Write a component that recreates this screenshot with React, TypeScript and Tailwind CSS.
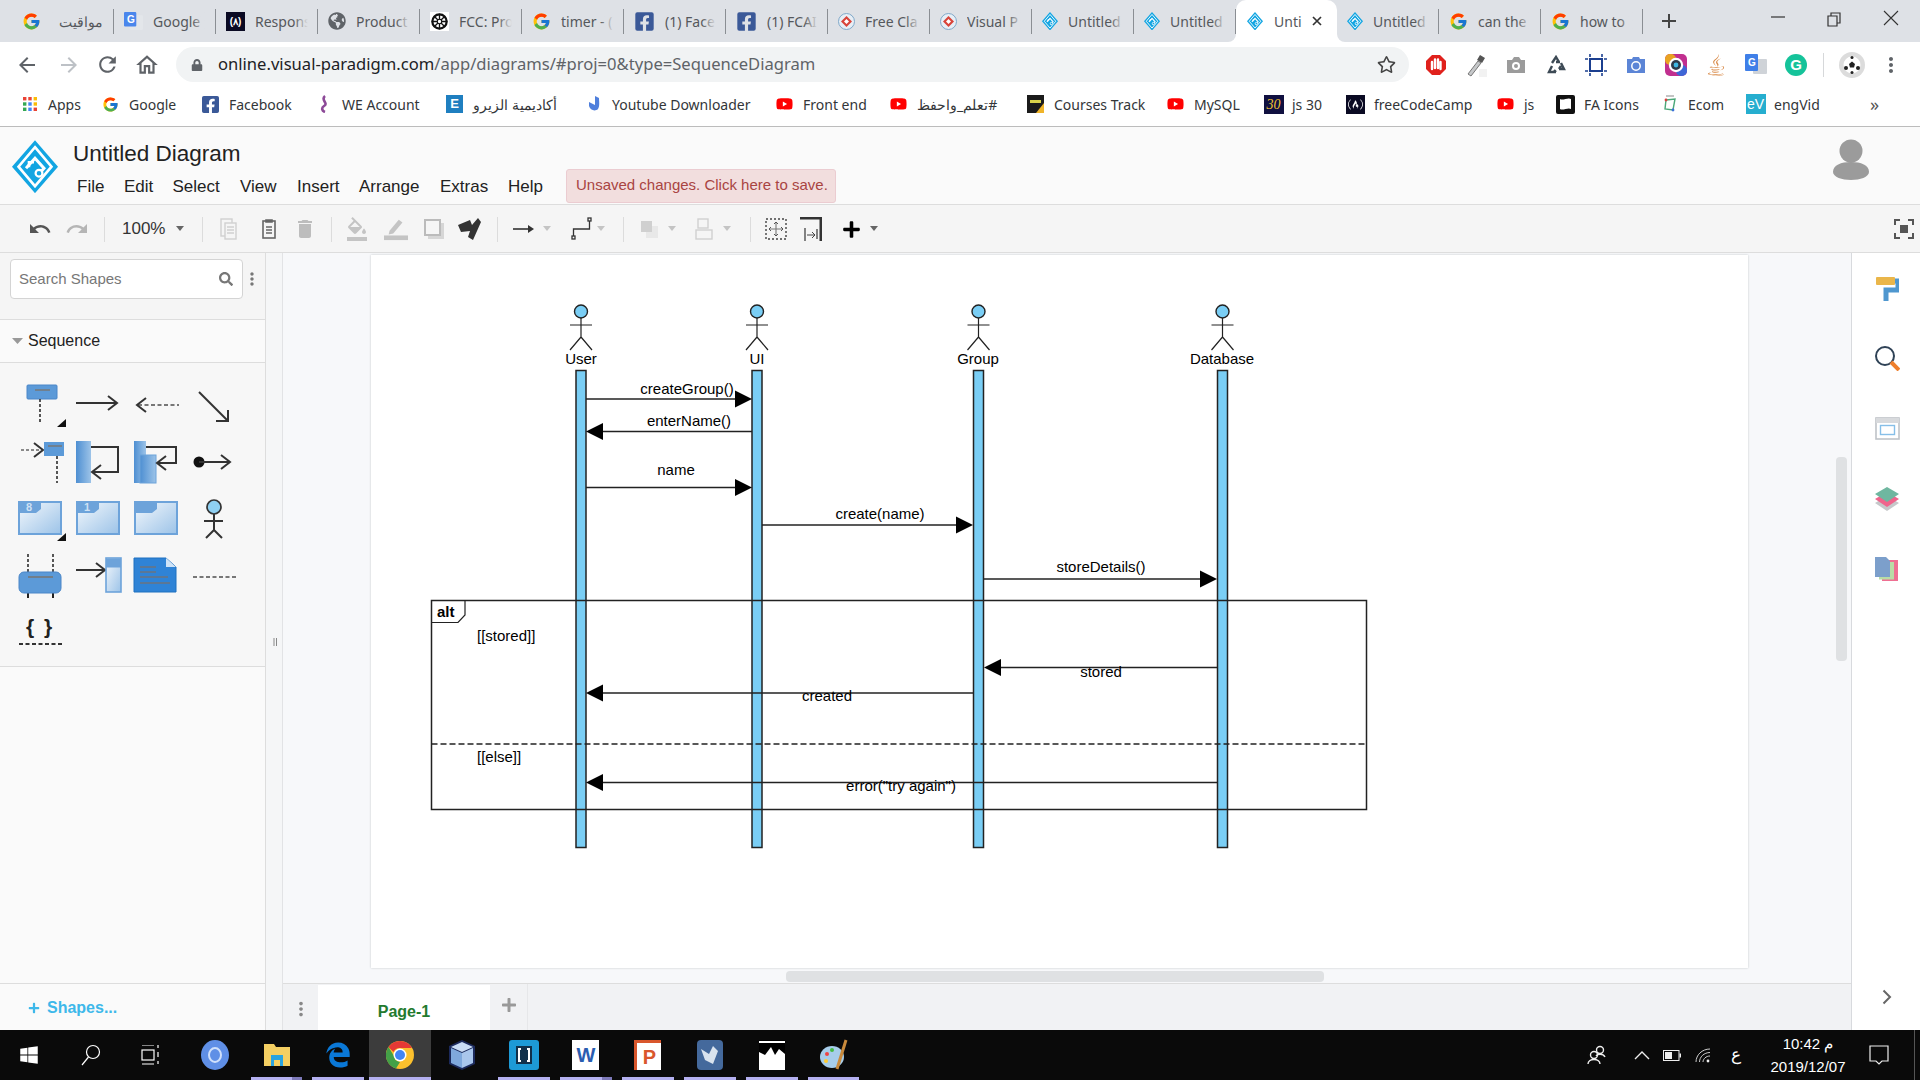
import React from 'react'
import { FcGoogle } from 'react-icons/fc'
import { FaFacebookSquare, FaYoutube, FaWindows, FaEdgeLegacy, FaPlus, FaSearch, FaLock, FaRegStar, FaGlobeAmericas, FaFreeCodeCamp, FaJava } from 'react-icons/fa'
import { MdUndo, MdRedo, MdDelete, MdArrowBack, MdArrowForward, MdRefresh, MdOutlineHome, MdMoreVert, MdFormatColorFill } from 'react-icons/md'

const ui = { fontFamily: '"Noto Sans", "Noto Sans CJK SC", sans-serif' }
const ar = { fontFamily: '"Liberation Sans", "Noto Sans", Arial, sans-serif' }

const VpLogo = ({ size = 16 }: { size?: number }) => (
  <svg width={size} height={size * 1.16} viewBox="0 0 46 53" className="shrink-0">
    <polygon points="23,0 46,26.5 23,53 0,26.5" fill="#12a5e2" />
    <polygon points="23,7 39.5,26.5 23,46 6.5,26.5" fill="none" stroke="#fff" strokeWidth="2.6" />
    <path d="M14 28 L23 18 L32 28 L25 36" fill="none" stroke="#fff" strokeWidth="3" />
    <circle cx="27" cy="33" r="3.4" fill="#12a5e2" stroke="#fff" strokeWidth="2.2" />
    <path d="M17 27 V22 H22" fill="none" stroke="#fff" strokeWidth="2.6" />
  </svg>
)

const FreeClass = () => (
  <svg width="17" height="17" viewBox="0 0 17 17" className="shrink-0">
    <circle cx="8.5" cy="8.5" r="8" fill="#e7eef5" stroke="#7fa8c9" />
    <polygon points="8.5,3 14,8.5 8.5,14 3,8.5" fill="#d9443a" />
    <polygon points="8.5,6 11,8.5 8.5,11 6,8.5" fill="#fff" />
  </svg>
)

const Translate = () => (
  <svg width="19" height="19" viewBox="0 0 17 17" className="shrink-0">
    <rect x="5" y="3" width="12" height="13" rx="1" fill="#e3e6ea" />
    <rect x="0" y="0" width="11" height="13" rx="1" fill="#4a86ec" />
    <text x="2.6" y="10" fontSize="9" fontWeight="700" fill="#fff" style={ar}>G</text>
  </svg>
)

const FccSquare = () => (
  <div className="w-[19px] h-[19px] bg-[#0a0a23] text-white text-[10px] font-bold flex items-center justify-center shrink-0" style={ar}>(٨)</div>
)

const FccRound = () => (
  <svg width="19" height="19" viewBox="0 0 17 17" className="shrink-0">
    <rect width="17" height="17" fill="#fff" />
    <circle cx="8.5" cy="8.5" r="6.4" fill="none" stroke="#111" strokeWidth="2" />
    <path d="M8.5 1.5V15.5M1.5 8.5H15.5M3.5 3.5L13.5 13.5M13.5 3.5L3.5 13.5" stroke="#111" strokeWidth="1.2" />
    <circle cx="8.5" cy="8.5" r="2" fill="#fff" stroke="#111" />
  </svg>
)

const tabs: { label: string; icon: React.ReactNode; rtl?: boolean }[] = [
  { label: 'مواقيت', icon: <FcGoogle size={19} className="shrink-0" />, rtl: true },
  { label: 'Google', icon: <Translate /> },
  { label: 'Respons', icon: <FccSquare /> },
  { label: 'Product', icon: <FaGlobeAmericas size={18} color="#5f6368" className="shrink-0" /> },
  { label: 'FCC: Pro', icon: <FccRound /> },
  { label: 'timer - (', icon: <FcGoogle size={19} className="shrink-0" /> },
  { label: '(1) Face', icon: <FaFacebookSquare size={21} color="#3b5998" className="shrink-0" /> },
  { label: '(1) FCAI', icon: <FaFacebookSquare size={21} color="#3b5998" className="shrink-0" /> },
  { label: 'Free Cla', icon: <FreeClass /> },
  { label: 'Visual P', icon: <FreeClass /> },
  { label: 'Untitled', icon: <VpLogo /> },
  { label: 'Untitled', icon: <VpLogo /> },
]

const tabsAfter: { label: string; icon: React.ReactNode }[] = [
  { label: 'Untitled', icon: <VpLogo /> },
  { label: 'can the', icon: <FcGoogle size={19} className="shrink-0" /> },
  { label: 'how to', icon: <FcGoogle size={19} className="shrink-0" /> },
]

const Tab = ({ label, icon, rtl }: { label: string; icon: React.ReactNode; rtl?: boolean }) => (
  <div className="w-[102px] h-full flex items-center shrink-0">
    <div className="flex-1 min-w-0 flex items-center gap-[10px] pl-[10px] pr-[9px]">
      {icon}
      <div className="relative flex-1 min-w-0 overflow-hidden">
        <div className={rtl ? 'whitespace-nowrap text-[14px] text-[#55585c] text-right pr-px' : 'whitespace-nowrap text-[14px] text-[#55585c]'} style={ui}>{label}</div>
        <div className={rtl ? 'absolute inset-y-0 left-0 w-[6px] bg-linear-to-l from-transparent to-[#dee1e6]' : 'absolute inset-y-0 right-0 w-[14px] bg-linear-to-r from-transparent to-[#dee1e6]'} />
      </div>
    </div>
    <div className="w-px h-[25px] bg-[#8a8e93] shrink-0" />
  </div>
)

const TabBar = () => (
  <div className="h-[42px] bg-[#dee1e6] flex items-stretch pl-[12px] shrink-0">
    {tabs.map((t, i) => (
      <Tab key={i} {...t} />
    ))}
    <div className="relative w-[101px] bg-white rounded-t-[10px] flex items-center pl-[11px] shrink-0">
      <div className="absolute left-[-8px] bottom-0 w-[8px] h-[8px] bg-white">
        <div className="w-full h-full bg-[#dee1e6] rounded-br-[8px]" />
      </div>
      <div className="absolute right-[-8px] bottom-0 w-[8px] h-[8px] bg-white">
        <div className="w-full h-full bg-[#dee1e6] rounded-bl-[8px]" />
      </div>
      <VpLogo />
      <div className="ml-[11px] text-[14px] text-[#55585c] w-[30px] overflow-hidden whitespace-nowrap" style={ui}>Unti</div>
      <svg width="12" height="12" viewBox="0 0 12 12" className="ml-[7px]"><path d="M2 2L10 10M10 2L2 10" stroke="#333" strokeWidth="1.7" /></svg>
    </div>
    {tabsAfter.map((t, i) => (
      <Tab key={i} {...t} />
    ))}
    <svg width="16" height="16" viewBox="0 0 16 16" className="self-center ml-[17.5px]"><path d="M8 1V15M1 8H15" stroke="#444" strokeWidth="2" /></svg>
    <svg width="16" height="16" viewBox="0 0 16 16" className="self-center ml-[93.5px] mb-[8px]"><path d="M1 8H15" stroke="#333" strokeWidth="1.2" /></svg>
    <svg width="16" height="16" viewBox="0 0 16 16" className="self-center ml-[40px] mb-[4px]"><path d="M2 5H11V15H2ZM5 5V2H14V12H11" fill="none" stroke="#333" strokeWidth="1.2" /></svg>
    <svg width="16" height="16" viewBox="0 0 16 16" className="self-center ml-[41px] mb-[6px]"><path d="M1 1L15 15M15 1L1 15" stroke="#333" strokeWidth="1.1" /></svg>
  </div>
)

const Ext = ({ children }: { children: React.ReactNode }) => (
  <div className="w-10 flex items-center justify-center shrink-0">{children}</div>
)

const AddressBar = () => (
  <div className="h-[42px] bg-white flex items-center pt-[3px] shrink-0">
    <div className="w-[176px] flex items-center shrink-0 pl-[15px]">
      <MdArrowBack size={24} color="#5f6368" />
      <MdArrowForward size={24} color="#bdc1c6" className="ml-[18px]" />
      <MdRefresh size={25} color="#5f6368" className="ml-[14px]" />
      <MdOutlineHome size={26} color="#5f6368" className="ml-[14px]" />
    </div>
    <div className="w-[1233px] h-[35px] bg-[#f1f3f4] rounded-full flex items-center pl-[15px] pr-[13px] shrink-0">
      <FaLock size={12} color="#5f6368" />
      <div className="ml-[15px] text-[16.6px] whitespace-nowrap" style={ui}>
        <span className="text-[#202124]">online.visual-paradigm.com</span>
        <span className="text-[#5f6368]">/app/diagrams/#proj=0&amp;type=SequenceDiagram</span>
      </div>
      <FaRegStar size={19} color="#444" className="ml-auto" />
    </div>
    <div className="flex items-center ml-[7px]">
      <Ext>
        <svg width="22" height="22" viewBox="0 0 22 22"><polygon points="7,1 15,1 21,7 21,15 15,21 7,21 1,15 1,7" fill="#e0211c" /><path d="M7 15V8M10 14V5.5M13 14V5.5M15.5 15V8" stroke="#fff" strokeWidth="2.4" strokeLinecap="round" /></svg>
      </Ext>
      <Ext>
        <svg width="22" height="24" viewBox="0 0 22 24"><path d="M3 21L13 8L16 10L6 23Z" fill="#c6c8ca" stroke="#777" /><path d="M12 7L15 2L20 5L17 10Z" fill="#555" /><rect x="14" y="16" width="8" height="8" fill="#f2f2f2" /></svg>
      </Ext>
      <Ext>
        <svg width="20" height="18" viewBox="0 0 20 18"><path d="M1 4H6L8 1H13L15 4H19V17H1Z" fill="#9b9b9b" /><circle cx="10" cy="10" r="4" fill="#fff" /><circle cx="10" cy="10" r="2" fill="#9b9b9b" /></svg>
      </Ext>
      <Ext>
        <svg width="20" height="20" viewBox="0 0 20 20" fill="none" stroke="#3d4a55" strokeWidth="2.4"><path d="M6 8L10 2L13 7M10 7H14" /><path d="M15 8L18 14H13M15 11L13 14" /><path d="M10 17H3L6 11M8 15L10 17" /></svg>
      </Ext>
      <Ext>
        <svg width="22" height="22" viewBox="0 0 22 22" fill="none" stroke="#1b3f8f"><rect x="5" y="5" width="12" height="12" strokeWidth="2" /><path d="M5 0V3M17 0V3M5 19V22M17 19V22M0 5H3M0 17H3M19 5H22M19 17H22" strokeWidth="1.6" /></svg>
      </Ext>
      <Ext>
        <svg width="20" height="18" viewBox="0 0 20 18"><path d="M1 3H6L7 1H13L14 3H19V17H1Z" fill="#5c85d6" /><circle cx="10" cy="10" r="4.2" fill="none" stroke="#fff" strokeWidth="1.5" /></svg>
      </Ext>
      <Ext>
        <svg width="22" height="22" viewBox="0 0 22 22"><rect width="22" height="22" rx="5" fill="#c12f8f" /><rect x="0" y="0" width="11" height="11" rx="5" fill="#e9a322" /><rect x="11" y="11" width="11" height="11" rx="5" fill="#3d66d6" /><circle cx="11" cy="11" r="7.2" fill="#fff" /><circle cx="11" cy="11" r="5" fill="#2f3b4a" /><circle cx="11" cy="11" r="2.4" fill="#3fb7e2" /></svg>
      </Ext>
      <Ext>
        <FaJava size={22} color="#d98b4a" />
      </Ext>
      <Ext>
        <svg width="22" height="22" viewBox="0 0 22 22"><rect x="8" y="5" width="14" height="15" rx="1" fill="#cfd3d8" /><rect x="0" y="0" width="13" height="17" rx="1" fill="#3f7fe8" /><text x="3" y="12" fontSize="10" fontWeight="700" fill="#fff" style={ar}>G</text></svg>
      </Ext>
      <Ext>
        <svg width="22" height="22" viewBox="0 0 22 22"><circle cx="11" cy="11" r="11" fill="#15c39a" /><text x="11" y="16" textAnchor="middle" fontSize="15" fontWeight="700" fill="#fff" style={ar}>G</text></svg>
      </Ext>
    </div>
    <div className="w-px h-[24px] bg-[#d6d8da] ml-[7px]" />
    <div className="w-[26px] h-[26px] rounded-full bg-[#dcdcdc] ml-[15px] flex items-center justify-center">
      <svg width="18" height="18" viewBox="0 0 18 18"><circle cx="9" cy="9" r="8.5" fill="#fff" /><path d="M9 5.5L12 8L11 11.5H7L6 8Z" fill="#222" /><circle cx="3" cy="12" r="2" fill="#222" /><circle cx="15" cy="12" r="2" fill="#222" /><circle cx="9" cy="1.6" r="1.5" fill="#222" /><circle cx="9" cy="16.5" r="1.5" fill="#222" /></svg>
    </div>
    <MdMoreVert size={24} color="#5f6368" className="ml-[14px]" />
  </div>
)

const Favicon = ({ children }: { children: React.ReactNode }) => (
  <div className="w-[17px] h-[18px] flex items-center justify-center shrink-0">{children}</div>
)

const YT = <FaYoutube size={18} color="#f00" />
const G = <FcGoogle size={17} />
const bookmarks: { label: string; cls: string; icon: React.ReactNode; rtl?: boolean }[] = [
  { label: 'Apps', cls: 'w-[81px]', icon: (
    <svg width="14" height="14" viewBox="0 0 14 14">
      <rect width="3.4" height="3.4" fill="#ea4335" /><rect x="5.3" width="3.4" height="3.4" fill="#ea4335" /><rect x="10.6" width="3.4" height="3.4" fill="#fbbc05" />
      <rect y="5.3" width="3.4" height="3.4" fill="#34a853" /><rect x="5.3" y="5.3" width="3.4" height="3.4" fill="#4285f4" /><rect x="10.6" y="5.3" width="3.4" height="3.4" fill="#fbbc05" />
      <rect y="10.6" width="3.4" height="3.4" fill="#34a853" /><rect x="5.3" y="10.6" width="3.4" height="3.4" fill="#4285f4" /><rect x="10.6" y="10.6" width="3.4" height="3.4" fill="#ea4335" />
    </svg>
  ) },
  { label: 'Google', cls: 'w-[100px]', icon: G },
  { label: 'Facebook', cls: 'w-[113px]', icon: <FaFacebookSquare size={21} color="#3b5998" /> },
  { label: 'WE Account', cls: 'w-[131px]', icon: (
    <svg width="12" height="18" viewBox="0 0 12 18"><path d="M7 1C2 5 11 8 6 11C3 13 4 16 7 17" fill="none" stroke="#8d4a98" strokeWidth="2.6" /></svg>
  ) },
  { label: 'أكاديمية الزيرو', cls: 'w-[139px]', icon: (
    <div className="w-[17px] h-[18px] bg-[#1f7fc0] text-white text-[13px] font-bold flex items-center justify-center" style={ar}>E</div>
  ), rtl: true },
  { label: 'Youtube Downloader', cls: 'w-[191px]', icon: (
    <svg width="14" height="18" viewBox="0 0 14 18"><path d="M8 1V10L2 7V11C3 15 8 17 11 14C13 11 12 6 12 3Z" fill="#4f7fdc" /></svg>
  ) },
  { label: 'Front end', cls: 'w-[114px]', icon: YT },
  { label: '#تعلم_واحفظ', cls: 'w-[137px]', icon: YT, rtl: true },
  { label: 'Courses Track', cls: 'w-[140px]', icon: (
    <svg width="17" height="18" viewBox="0 0 17 18"><rect width="17" height="18" fill="#1b1b1b" /><polygon points="17,18 9,18 17,8" fill="#f0b429" /><rect x="3" y="5" width="11" height="3" fill="#d9d24a" /></svg>
  ) },
  { label: 'MySQL', cls: 'w-[98px]', icon: YT },
  { label: 'js 30', cls: 'w-[82px]', icon: (
    <div className="w-[20px] h-[19px] bg-[#101040] text-[#f2c230] text-[14px] italic flex items-center justify-center shrink-0" style={{ fontFamily: '"Liberation Serif", serif' }}>30</div>
  ) },
  { label: 'freeCodeCamp', cls: 'w-[150px]', icon: <div className="w-[19px] h-[19px] bg-[#0a0a23] flex items-center justify-center shrink-0"><FaFreeCodeCamp size={15} color="#fff" /></div> },
  { label: 'js', cls: 'w-[60px]', icon: YT },
  { label: 'FA Icons', cls: 'w-[104px]', icon: (
    <svg width="19" height="19" viewBox="0 0 19 19" className="shrink-0"><rect width="19" height="19" rx="2" fill="#111" /><path d="M4 4C7 6 12 2 15 4V14C12 12 7 16 4 14Z" fill="#fff" /></svg>
  ) },
  { label: 'Ecom', cls: 'w-[86px]', icon: (
    <svg width="16" height="18" viewBox="0 0 16 18" fill="none"><path d="M4 5L13 4L11 15L3 14Z" stroke="#4aa878" strokeWidth="1.4" /><circle cx="4" cy="5" r="1.4" fill="#d94040" /><circle cx="11" cy="15" r="1.4" fill="#3a6fd8" /><path d="M4 1H12" stroke="#888" /></svg>
  ) },
  { label: 'engVid', cls: 'w-[120px]', icon: (
    <div className="w-[20px] h-[20px] bg-[#26aecf] text-white text-[14px] flex items-center justify-center shrink-0" style={ar}>eV</div>
  ) },
]

const Bookmarks = () => (
  <div className="h-[43px] bg-white border-b border-[#bcbcbc] flex items-center pl-[21px] pb-[2px] shrink-0">
    {bookmarks.map((b) => (
      <div key={b.label} className={b.cls + ' flex items-center gap-[10px] shrink-0'}>
        <Favicon>{b.icon}</Favicon>
        <span dir={b.rtl ? 'rtl' : undefined} className="text-[14px] text-[#333639] whitespace-nowrap" style={ui}>{b.label}</span>
      </div>
    ))}
    <span className="ml-[3px] text-[#555] text-[18px] leading-none" style={ui}>»</span>
  </div>
)

const menu = [
  { label: 'File', cls: 'w-[47px]' },
  { label: 'Edit', cls: 'w-[48.5px]' },
  { label: 'Select', cls: 'w-[67.5px]' },
  { label: 'View', cls: 'w-[57px]' },
  { label: 'Insert', cls: 'w-[62px]' },
  { label: 'Arrange', cls: 'w-[81px]' },
  { label: 'Extras', cls: 'w-[68px]' },
  { label: 'Help', cls: 'w-[58px]' },
]

const AppHeader = () => (
  <div className="h-[78px] bg-[#fafafa] border-b border-[#dddddd] flex shrink-0" style={ar}>
    <div className="pl-[12px] pt-[13px] shrink-0">
      <VpLogo size={46} />
    </div>
    <div className="pl-[15px] pt-[12px]">
      <div className="text-[22.5px] leading-[30px] text-[#222] whitespace-nowrap">Untitled Diagram</div>
      <div className="flex items-center pl-[4px]">
        {menu.map((m) => (
          <div key={m.label} className={m.cls + ' text-[17px] leading-[34px] text-[#222]'}>{m.label}</div>
        ))}
        <div className="w-[270px] h-[34px] mb-[2px] bg-[#f2dede] border border-[#ebccd1] rounded-[3px] text-[#a94442] text-[15px] leading-[30px] pl-[9px] whitespace-nowrap">Unsaved changes. Click here to save.</div>
      </div>
    </div>
    <div className="ml-auto pr-[51px] pt-[12px]">
      <svg width="36" height="41" viewBox="0 0 36 41"><circle cx="18" cy="12" r="11.5" fill="#9b9b9b" /><path d="M0 33C0 26 8 23 18 23C28 23 36 26 36 33C36 38 27 41 18 41C9 41 0 38 0 33Z" fill="#9b9b9b" /></svg>
    </div>
  </div>
)

const Sep = ({ cls }: { cls: string }) => <div className={cls + ' w-px h-[25px] bg-[#dcdcdc] shrink-0'} />
const Caret = ({ cls, dark }: { cls: string; dark?: boolean }) => (
  <svg width="8" height="6" viewBox="0 0 8 6" className={cls + ' shrink-0'}><polygon points="0,0 8,0 4,5" fill={dark ? '#666' : '#c4c4c4'} /></svg>
)
const Tool = ({ cls, children }: { cls: string; children: React.ReactNode }) => (
  <div className={cls + ' w-6 h-6 flex items-center justify-center shrink-0'}>{children}</div>
)

const Toolbar = () => (
  <div className="h-[48px] bg-[#f5f5f5] border-b border-[#dddddd] flex items-center pl-[28px] pt-[1px] shrink-0" style={ar}>
    <Tool cls=""><MdUndo size={26} color="#555" /></Tool>
    <Tool cls="ml-[12.5px]"><MdRedo size={26} color="#b5b5b5" /></Tool>
    <Sep cls="ml-[15.5px]" />
    <div className="ml-[17px] w-[43px] text-[17px] text-[#333]">100%</div>
    <Caret cls="ml-[11px]" dark />
    <Sep cls="ml-[18px]" />
    <Tool cls="ml-[13px]">
      <svg width="18" height="22" viewBox="0 0 18 22" fill="none" stroke="#d0d0d0" strokeWidth="1.4"><rect x="2" y="1" width="11" height="17" /><rect x="6" y="5" width="11" height="16" fill="#f5f5f5" /><path d="M8 9H15M8 12H15M8 15H15" /></svg>
    </Tool>
    <Tool cls="ml-[17px]">
      <svg width="14" height="20" viewBox="0 0 14 20" fill="none" stroke="#666" strokeWidth="1.6"><rect x="1" y="2" width="12" height="17" /><path d="M4 1H10V3H4Z" fill="#666" /><path d="M4 8H10M4 11H10M4 14H10" /></svg>
    </Tool>
    <Tool cls="ml-[12px]"><MdDelete size={26} color="#bdbdbd" /></Tool>
    <Sep cls="ml-[14px]" />
    <Tool cls="ml-[13px]"><MdFormatColorFill size={24} color="#c4c4c4" /></Tool>
    <Tool cls="ml-[15px]">
      <svg width="26" height="24" viewBox="0 0 26 24"><path d="M6 14L16 2L20 5L10 17L5 18Z" fill="#c4c4c4" /><rect x="0" y="19" width="26" height="5" fill="#c4c4c4" /></svg>
    </Tool>
    <Tool cls="ml-[13.5px]">
      <svg width="20" height="20" viewBox="0 0 20 20"><rect x="4" y="4" width="16" height="16" fill="#d6d6d6" /><rect x="1" y="1" width="15" height="15" fill="#f5f5f5" stroke="#bbb" strokeWidth="2" /></svg>
    </Tool>
    <Tool cls="ml-[12.5px]">
      <svg width="24" height="24" viewBox="0 0 24 24"><path d="M0 8L12 3L14 8L20 1L23 5L15 23L10 20L12 14L3 15Z" fill="#333" /></svg>
    </Tool>
    <Sep cls="ml-[15px]" />
    <Tool cls="ml-[13px]">
      <svg width="22" height="10" viewBox="0 0 22 10"><path d="M1 5H20" stroke="#333" strokeWidth="1.6" /><polygon points="16,1 22,5 16,9" fill="#333" /></svg>
    </Tool>
    <Caret cls="ml-[8px]" />
    <Tool cls="ml-[19px]">
      <svg width="22" height="24" viewBox="0 0 22 24" fill="none" stroke="#333" strokeWidth="1.3"><rect x="1" y="19" width="3" height="3" /><rect x="17" y="1" width="3" height="3" /><path d="M2.5 19V12H18.5V4" /></svg>
    </Tool>
    <Caret cls="ml-[3px]" />
    <Sep cls="ml-[18px]" />
    <Tool cls="ml-[13px]">
      <svg width="20" height="20" viewBox="0 0 20 20"><rect x="7" y="7" width="12" height="12" fill="#e8e8e8" /><rect x="2" y="2" width="11" height="11" fill="#d0d0d0" /></svg>
    </Tool>
    <Caret cls="ml-[7px]" />
    <Tool cls="ml-[16px]">
      <svg width="18" height="22" viewBox="0 0 18 22" fill="none" stroke="#d0d0d0" strokeWidth="1.4"><rect x="3" y="1" width="10" height="9" /><rect x="1" y="12" width="16" height="9" /></svg>
    </Tool>
    <Caret cls="ml-[7px]" />
    <Sep cls="ml-[18.5px]" />
    <Tool cls="ml-[13.5px]">
      <svg width="22" height="22" viewBox="0 0 22 22" fill="none"><rect x="1" y="1" width="20" height="20" stroke="#444" strokeWidth="1.4" strokeDasharray="2 2" /><path d="M11 4V18M4 11H18" stroke="#777" strokeWidth="1.1" /><path d="M9 6L11 4L13 6M9 16L11 18L13 16M6 9L4 11L6 13M16 9L18 11L16 13" stroke="#555" /></svg>
    </Tool>
    <Tool cls="ml-[11px]">
      <svg width="22" height="24" viewBox="0 0 22 24" fill="none"><path d="M0 1H21V24" stroke="#333" strokeWidth="3" /><path d="M5 11V24M17 12V22" stroke="#444" strokeWidth="1.3" /><path d="M7 18H15M12 15L15 18L12 21" stroke="#444" /></svg>
    </Tool>
    <Tool cls="ml-[16px]"><FaPlus size={19} color="#000" /></Tool>
    <Caret cls="ml-[7px]" dark />
    <div className="ml-auto mr-[4px] w-6 h-6 flex items-center justify-center">
      <svg width="20" height="20" viewBox="0 0 20 20" fill="none" stroke="#555" strokeWidth="2"><path d="M1 6V1H6M14 1H19V6M19 14V19H14M6 19H1V14" /><rect x="6" y="6" width="8" height="8" fill="#555" stroke="none" /></svg>
    </div>
  </div>
)

const grad = (
  <defs>
    <linearGradient id="boxBlue" x1="0" y1="0" x2="1" y2="1">
      <stop offset="0" stopColor="#f4f8fc" />
      <stop offset="1" stopColor="#9cc3e8" />
    </linearGradient>
    <linearGradient id="barBlue" x1="0" y1="0" x2="1" y2="0">
      <stop offset="0" stopColor="#4e8fd2" />
      <stop offset="1" stopColor="#9cc3e8" />
    </linearGradient>
  </defs>
)

const Cell = ({ children }: { children: React.ReactNode }) => (
  <svg width="46" height="46" viewBox="0 0 46 46" className="overflow-visible">{children}</svg>
)
const Corner = () => <polygon points="48,39 48,47 39,47" fill="#111" />
const Head = ({ x, y, dir = 1 }: { x: number; y: number; dir?: number }) => (
  <path d={`M${x - 9 * dir} ${y - 7}L${x} ${y}L${x - 9 * dir} ${y + 7}`} fill="none" stroke="#333" strokeWidth="2" />
)
const Frame = ({ tab }: { tab?: string }) => (
  <>
    <rect x="1" y="8" width="42" height="32" fill="url(#boxBlue)" stroke="#6da3da" strokeWidth="2" />
    <path d="M1 8H23V15L18 19H1Z" fill="#6da3da" />
    {tab && <text x="8" y="17" fontSize="11" fontWeight="700" fill="#cfe1f4" style={ar}>{tab}</text>}
  </>
)

const shapes = [
  <Cell key="0"><rect x="9" y="5" width="30" height="14" rx="1" fill="#5c9ad8" stroke="#4a86c8" /><path d="M17 10H32" stroke="#777" strokeWidth="1.5" /><path d="M22 19V43" stroke="#444" strokeWidth="1.8" strokeDasharray="3 2" /><Corner /></Cell>,
  <Cell key="1"><path d="M0 23H41" stroke="#333" strokeWidth="2" /><Head x={41} y={23} /></Cell>,
  <Cell key="2"><path d="M4 25H45" stroke="#777" strokeWidth="1.8" strokeDasharray="4 2.5" /><Head x={3} y={25} dir={-1} /></Cell>,
  <Cell key="3"><path d="M7 12L36 41" stroke="#333" strokeWidth="2" /><path d="M36 30L36 41L24 41" fill="none" stroke="#333" strokeWidth="2" /></Cell>,
  <Cell key="4"><path d="M3 13H25" stroke="#666" strokeWidth="1.7" strokeDasharray="3 2" /><Head x={25} y={13} /><rect x="26" y="5" width="20" height="14" fill="#5c9ad8" /><path d="M30 9H44" stroke="#777" strokeWidth="1.5" /><path d="M39 19V46" stroke="#444" strokeWidth="1.8" strokeDasharray="3 2" /></Cell>,
  <Cell key="5"><rect x="0" y="4" width="15" height="42" fill="url(#barBlue)" /><path d="M15 10H42V35H17" fill="none" stroke="#333" strokeWidth="2" /><Head x={16} y={35} dir={-1} /></Cell>,
  <Cell key="6"><rect x="0" y="4" width="12" height="42" fill="url(#barBlue)" /><rect x="6" y="18" width="16" height="28" fill="url(#barBlue)" stroke="#6da3da" /><path d="M12 10H42V26H23" fill="none" stroke="#333" strokeWidth="2" /><Head x={23} y={26} dir={-1} /></Cell>,
  <Cell key="7"><circle cx="7" cy="25" r="5.5" fill="#111" /><path d="M7 25H38" stroke="#333" strokeWidth="2" /><Head x={38} y={25} /></Cell>,
  <Cell key="8"><Frame tab="8" /><Corner /></Cell>,
  <Cell key="9"><Frame tab="1" /></Cell>,
  <Cell key="10"><Frame /></Cell>,
  <Cell key="11"><circle cx="22" cy="13" r="7" fill="#8fd0f2" stroke="#333" strokeWidth="1.7" /><path d="M22 20V36M12 27H31M22 36L14 44M22 36L30 44" stroke="#333" strokeWidth="2" fill="none" /></Cell>,
  <Cell key="12"><path d="M10 3V21M35 3V21" stroke="#444" strokeWidth="1.8" strokeDasharray="3 2" /><path d="M10 42V47M35 42V47" stroke="#222" strokeWidth="2" /><rect x="1" y="21" width="42" height="21" rx="5" fill="#5c9ad8" stroke="#4a86c8" /><path d="M10 26H35" stroke="#777" strokeWidth="1.6" /></Cell>,
  <Cell key="13"><path d="M0 19H29" stroke="#333" strokeWidth="2" /><Head x={29} y={19} /><rect x="30" y="7" width="15" height="34" fill="url(#boxBlue)" stroke="#6da3da" strokeWidth="1.6" /><path d="M30 12H45" stroke="#6da3da" strokeWidth="9" /></Cell>,
  <Cell key="14"><path d="M0 7H32L42 16V41H0Z" fill="#2f83d6" stroke="#1f70c0" /><path d="M32 7V16H42" fill="#cfe3f7" /><path d="M6 16H22M6 21H22M6 26H34M6 32H36" stroke="#6b7480" strokeWidth="1.7" /></Cell>,
  <Cell key="15"><path d="M1 26H44" stroke="#777" strokeWidth="1.8" strokeDasharray="4 2.5" /></Cell>,
  <Cell key="16"><text x="8" y="26" fontSize="21" fontWeight="700" fill="#222" style={ar}>{'{'}</text><text x="26" y="26" fontSize="21" fontWeight="700" fill="#222" style={ar}>{'}'}</text><path d="M1 36H45" stroke="#333" strokeWidth="1.9" strokeDasharray="4 2.5" /></Cell>,
]

const Sidebar = () => (
  <div className="w-[266px] border-r border-[#dddddd] bg-[#fafafa] flex flex-col shrink-0" style={ar}>
    <div className="h-[67px] bg-[#f5f5f5] border-b border-[#dddddd] flex items-start pl-[10px] pt-[6px] shrink-0">
      <div className="w-[233px] h-[40px] bg-white border border-[#d4d4d4] rounded-[4px] flex items-center pl-[8px] pr-[9px]">
        <span className="text-[15px] text-[#777]">Search Shapes</span>
        <FaSearch size={14} color="#777" className="ml-auto" />
      </div>
      <MdMoreVert size={20} color="#777" className="mt-[10px] ml-[-1px]" />
    </div>
    <div className="h-[43px] border-b border-[#dddddd] flex items-center pl-[12px] shrink-0">
      <svg width="11" height="6" viewBox="0 0 11 6"><polygon points="0,0 11,0 5.5,6" fill="#999" /></svg>
      <span className="ml-[5px] text-[16px] text-[#222]">Sequence</span>
    </div>
    <div className="h-[304px] bg-[#f7f7f7] border-b border-[#dddddd] pl-[18px] pt-[17px] shrink-0">
      <svg width="0" height="0" className="absolute">{grad}</svg>
      <div className="grid grid-cols-[repeat(4,46px)] gap-x-[12px] gap-y-[11px]">{shapes}</div>
    </div>
    <div className="flex-1" />
    <div className="h-[47px] border-t border-[#dddddd] flex items-center pl-[28px] pt-[2px] shrink-0">
      <FaPlus size={12} color="#3db8ea" />
      <span className="ml-[7px] text-[16px] font-bold text-[#3db8ea]">Shapes...</span>
    </div>
  </div>
)

const lifelines = [576, 752, 973.5, 1217.5]
const actors = [581, 757, 978.5, 1222.5]
const msgs = [
  { a: 586, b: 752, y: 399 },
  { a: 752, b: 586, y: 431.5 },
  { a: 586, b: 752, y: 487.5 },
  { a: 762, b: 973, y: 525 },
  { a: 984, b: 1217, y: 579 },
  { a: 1217, b: 984, y: 667.5 },
  { a: 973, b: 586, y: 693 },
  { a: 1217, b: 586, y: 782.5 },
]

const labels = [
  { t: 'User', c: 'left-[210px] top-[96px] -translate-x-1/2' },
  { t: 'UI', c: 'left-[386px] top-[96px] -translate-x-1/2' },
  { t: 'Group', c: 'left-[607px] top-[96px] -translate-x-1/2' },
  { t: 'Database', c: 'left-[851px] top-[96px] -translate-x-1/2' },
  { t: 'createGroup()', c: 'left-[316px] top-[126px] -translate-x-1/2' },
  { t: 'enterName()', c: 'left-[318px] top-[158px] -translate-x-1/2' },
  { t: 'name', c: 'left-[305px] top-[207px] -translate-x-1/2' },
  { t: 'create(name)', c: 'left-[509px] top-[251px] -translate-x-1/2' },
  { t: 'storeDetails()', c: 'left-[730px] top-[304px] -translate-x-1/2' },
  { t: 'stored', c: 'left-[730px] top-[409px] -translate-x-1/2' },
  { t: 'created', c: 'left-[456px] top-[433px] -translate-x-1/2' },
  { t: 'error("try again")', c: 'left-[530px] top-[523px] -translate-x-1/2' },
  { t: '[[stored]]', c: 'left-[106px] top-[373px]' },
  { t: '[[else]]', c: 'left-[106px] top-[494px]' },
]

const Diagram = () => (
  <div className="relative w-[1377px] h-[713px] bg-white shadow-[0_0_2px_#c4c6c9]" style={ar}>
    <svg width="1377" height="713" viewBox="371 255 1377 713" className="absolute inset-0">
      {actors.map((x) => (
        <g key={x} fill="none" stroke="#222" strokeWidth="1.2">
          <circle cx={x} cy="311.5" r="6.5" fill="#7acef5" strokeWidth="1.4" />
          <path d={`M${x} 318V337M${x - 11} 325H${x + 11}M${x} 337L${x - 11} 350M${x} 337L${x + 11} 350`} />
        </g>
      ))}
      {lifelines.map((x) => (
        <rect key={x} x={x} y="370.5" width="10" height="477" fill="#7acef5" stroke="#222" strokeWidth="1.5" />
      ))}
      {msgs.map((m) => {
        const d = m.b > m.a ? 1 : -1
        return (
          <g key={m.y}>
            <line x1={m.a} y1={m.y} x2={m.b - 16 * d} y2={m.y} stroke="#222" strokeWidth="1.3" />
            <polygon points={`${m.b},${m.y} ${m.b - 17 * d},${m.y - 8.5} ${m.b - 17 * d},${m.y + 8.5}`} fill="#000" />
          </g>
        )
      })}
      <rect x="431.5" y="600.5" width="935" height="209" fill="none" stroke="#222" strokeWidth="1.5" />
      <path d="M431.5 622.5H458L465 615V600.5" fill="none" stroke="#222" strokeWidth="1.2" />
      <line x1="431.5" y1="744" x2="1366" y2="744" stroke="#222" strokeWidth="1.4" strokeDasharray="6 3" />
    </svg>
    {labels.map((l) => (
      <span key={l.t} className={l.c + ' absolute text-[15px] leading-[16px] text-black whitespace-nowrap'}>{l.t}</span>
    ))}
    <span className="absolute left-[66px] top-[349px] text-[15px] leading-[16px] font-bold text-black">alt</span>
  </div>
)

const Canvas = () => (
  <div className="flex-1 min-w-0 flex flex-col" style={ar}>
    <div className="relative flex-1 bg-[#f7f8fa] pl-[88px] pt-[2px] overflow-hidden">
      <Diagram />
      <div className="absolute left-[503px] bottom-[1px] w-[538px] h-[11px] bg-[#dfe1e3] rounded-[4px]" />
      <div className="absolute right-[4px] top-[204px] w-[11px] h-[204px] bg-[#dfe1e3] rounded-[4px]" />
    </div>
    <div className="h-[47px] bg-[#f1f2f4] border-t border-[#dddddd] flex items-stretch shrink-0">
      <div className="w-[35px] flex items-center justify-center pt-[4px]"><MdMoreVert size={22} color="#888" /></div>
      <div className="w-[172px] mt-px bg-white flex items-center justify-center pt-[9px] text-[16px] font-bold text-[#237a2e]">Page-1</div>
      <div className="w-[38px] flex items-center justify-center border-r border-[#e6e7e9] pb-[4px]"><FaPlus size={16} color="#999" /></div>
    </div>
  </div>
)

const RightPanel = () => (
  <div className="w-[69px] bg-white border-l border-[#d8dade] flex flex-col items-center pl-[2px] pt-[24px] shrink-0">
    <div className="h-[70px] w-full flex justify-center">
      <svg width="24" height="25" viewBox="0 0 24 25"><path d="M20 4H23V13H11V24" fill="none" stroke="#4f97cf" strokeWidth="5" /><rect x="1" y="0" width="19" height="8" rx="1" fill="#eab64a" /></svg>
    </div>
    <div className="h-[70px] w-full flex justify-center">
      <svg width="26" height="26" viewBox="0 0 26 26" className="mt-[-2px]"><circle cx="11" cy="11" r="9" fill="#fff" stroke="#2f4256" strokeWidth="2" /><path d="M17 17L25 25" stroke="#ee7f2d" strokeWidth="4" /></svg>
    </div>
    <div className="h-[70px] w-full flex justify-center">
      <svg width="25" height="23" viewBox="0 0 25 23"><rect x="1" y="1" width="23" height="21" fill="#fff" stroke="#bfc3c8" strokeWidth="1.6" /><rect x="1" y="1" width="23" height="5" fill="#d8dadd" /><rect x="5.5" y="8.5" width="14" height="9" fill="none" stroke="#86bfe8" strokeWidth="1.4" /></svg>
    </div>
    <div className="h-[70px] w-full flex justify-center">
      <svg width="24" height="25" viewBox="0 0 24 25"><polygon points="12,9 24,16 12,24 0,16" fill="#c6c8ca" /><polygon points="12,5 24,12 12,20 0,12" fill="#f0648c" /><polygon points="12,0 24,7 12,15 0,7" fill="#6fb7a0" /></svg>
    </div>
    <div className="h-[70px] w-full flex justify-center">
      <svg width="24" height="25" viewBox="0 0 24 25"><rect x="7" y="3" width="16" height="21" fill="#ef6f92" /><rect x="4" y="5" width="15" height="17.5" fill="#b9dca6" /><path d="M0 0H11L15 4V20H0Z" fill="#7c9fcb" /></svg>
    </div>
    <div className="flex-1" />
    <svg width="10" height="16" viewBox="0 0 10 16" className="mb-[25px]"><path d="M1.5 1.5L8 8L1.5 14.5" fill="none" stroke="#666" strokeWidth="2" /></svg>
  </div>
)

const Slot = ({ on, split, active, children }: { on?: boolean; split?: boolean; active?: boolean; children: React.ReactNode }) => (
  <div className={active ? 'relative w-[61.9px] h-full bg-[#3c3c3c] flex items-center justify-center shrink-0' : 'relative w-[61.9px] h-full flex items-center justify-center shrink-0'}>
    {children}
    {on && <div className={active ? 'absolute bottom-0 inset-x-0 h-[3px] bg-[#b4b0f0]' : 'absolute bottom-0 inset-x-[5px] h-[3px] bg-[#b4b0f0]'} />}
    {split && <div className="absolute bottom-0 right-[5px] w-[10px] h-[3px] bg-[#7d79b8]" />}
  </div>
)

const Chrome = ({ size = 28 }: { size?: number }) => (
  <svg width={size} height={size} viewBox="0 0 28 28">
    <circle cx="14" cy="14" r="14" fill="#fbc02d" />
    <path d="M14 0A14 14 0 0 1 26 7H14A7 7 0 0 0 7.5 11L2.5 6A14 14 0 0 1 14 0Z" fill="#e53935" />
    <path d="M2.5 6L8 15A7 7 0 0 0 14 21L10 27.5A14 14 0 0 1 2.5 6Z" fill="#43a047" />
    <circle cx="14" cy="14" r="6.5" fill="#fff" />
    <circle cx="14" cy="14" r="5" fill="#4285f4" />
  </svg>
)

const Taskbar = () => (
  <div className="h-[50px] bg-[#0a0a0a] flex items-center shrink-0 text-white" style={ui}>
    <div className="flex items-center h-full ml-[-2px]">
      <Slot><FaWindows size={20} color="#fff" /></Slot>
      <Slot>
        <svg width="20" height="22" viewBox="0 0 20 22" fill="none" stroke="#fff" strokeWidth="1.2"><circle cx="12" cy="8" r="6.5" /><path d="M7.5 13L1 21" /></svg>
      </Slot>
      <Slot>
        <svg width="20" height="20" viewBox="0 0 20 20" fill="none" stroke="#fff" strokeWidth="1.2" className="ml-[-4px]"><path d="M1 0H13M1 19H13" /><rect x="1" y="5" width="12" height="10" /><path d="M17 0V3M17 7V12M17 16V19" /></svg>
      </Slot>
      <Slot>
        <svg width="28" height="30" viewBox="0 0 28 30"><ellipse cx="14" cy="15" rx="14" ry="15" fill="#5f8fe6" /><ellipse cx="14" cy="15" rx="6" ry="7" fill="none" stroke="#cfe0fb" strokeWidth="2" /></svg>
      </Slot>
      <Slot on split>
        <svg width="28" height="24" viewBox="0 0 28 24"><path d="M1 1H11L13 4H27V23H1Z" fill="#f4cf62" /><rect x="8" y="12" width="12" height="11" fill="#29a3e0" /><rect x="11" y="17" width="6" height="6" fill="#f4cf62" /></svg>
      </Slot>
      <Slot on><FaEdgeLegacy size={26} color="#0a78d7" /></Slot>
      <Slot on active><Chrome /></Slot>
      <Slot>
        <svg width="26" height="30" viewBox="0 0 26 30"><polygon points="13,0 26,6 26,24 13,30 0,24 0,6" fill="#1c2a5c" /><polygon points="13,2 24,7 13,12 2,7" fill="#c9dcf5" /><polygon points="2,8 13,13 13,28 2,23" fill="#7fa8dc" /><polygon points="24,8 13,13 13,28 24,23" fill="#a9c6ec" /></svg>
      </Slot>
      <Slot on>
        <svg width="30" height="30" viewBox="0 0 30 30"><rect width="30" height="30" rx="3" fill="#1d9ad6" /><rect x="7" y="6" width="16" height="18" fill="#10304a" /><path d="M12 9H10V21H12M18 9H20V21H18" fill="none" stroke="#fff" strokeWidth="2" /></svg>
      </Slot>
      <Slot on split>
        <div className="relative w-[27px] h-[30px] bg-white flex items-center justify-center text-[#2a5db0] text-[20px] font-bold" style={ar}>W</div>
      </Slot>
      <Slot on>
        <div className="w-[27px] h-[30px] bg-white border-l-[3px] border-t-[3px] border-[#d9572c] flex items-center justify-center text-[#d9572c] text-[20px] font-bold" style={ar}>P</div>
      </Slot>
      <Slot on>
        <svg width="26" height="30" viewBox="0 0 26 30"><rect width="26" height="30" rx="4" fill="#44699c" /><path d="M4 9L12 14L16 6L21 11L16 24L8 20Z" fill="#d9e3ee" /></svg>
      </Slot>
      <Slot on>
        <svg width="26" height="30" viewBox="0 0 26 30"><rect width="26" height="30" fill="#fff" /><path d="M0 0H26V14L20 9L16 15L12 7L6 15L0 12Z" fill="#000" /><rect x="0" y="1" width="26" height="2" fill="#fff" /></svg>
      </Slot>
      <Slot on>
        <svg width="28" height="32" viewBox="0 0 28 32"><ellipse cx="12" cy="18" rx="12" ry="11" fill="#a7cdea" /><circle cx="7" cy="15" r="2" fill="#e44" /><circle cx="12" cy="11" r="2" fill="#4b4" /><circle cx="6" cy="22" r="2" fill="#fc3" /><path d="M26 1L17 30" stroke="#c98a3c" strokeWidth="3" /></svg>
      </Slot>
    </div>

    <div className="ml-auto flex items-center h-full">
      <svg width="20" height="20" viewBox="0 0 20 20" fill="none" stroke="#eee" strokeWidth="1.4"><circle cx="13" cy="5" r="3.5" /><path d="M9 11C10 9 16 8 18 12" /><circle cx="7" cy="10" r="3.5" /><path d="M1 19C1 13 13 13 13 19" /></svg>
      <svg width="16" height="9" viewBox="0 0 16 9" className="ml-[27px]" fill="none" stroke="#eee" strokeWidth="1.4"><path d="M1 8L8 1L15 8" /></svg>
      <svg width="18" height="11" viewBox="0 0 18 11" className="ml-[13px]"><rect x="0.5" y="0.5" width="15.5" height="10" fill="none" stroke="#eee" /><rect x="2" y="2" width="7" height="7" fill="#eee" /><rect x="16.5" y="3.5" width="1.5" height="4" fill="#eee" /></svg>
      <svg width="16" height="15" viewBox="0 0 16 15" className="ml-[14px]" fill="none" stroke="#ccc" strokeWidth="1"><path d="M1 14C1 7 7 1 15 1M4.5 14C4.5 9 9 4.5 15 4.5M8 14C8 11 11 8 15 8" /><circle cx="13" cy="13" r="1.4" fill="#eee" stroke="none" /></svg>
      <span className="ml-[20px] text-[17px] w-[14px]" style={ar}>ع</span>
      <div className="ml-[18px] w-[90px] text-center text-[15px] leading-[23px]" style={ar}>
        <div dir="ltr">10:42 م</div>
        <div>2019/12/07</div>
      </div>
      <svg width="20" height="20" viewBox="0 0 20 20" className="ml-[16px]" fill="none" stroke="#eee" strokeWidth="1.2"><path d="M1 1H19V16H13L10 19L7 16H1Z" /></svg>
      <div className="ml-[25px] w-px h-full bg-[#555]" />
      <div className="w-[5px]" />
    </div>
  </div>
)

const App = () => {
  return (
    <div className="w-[1920px] h-[1080px] flex flex-col overflow-hidden bg-white">
      <TabBar />
      <AddressBar />
      <Bookmarks />
      <AppHeader />
      <Toolbar />
      <div className="flex-1 min-h-0 flex">
        <Sidebar />
        <div className="w-[17px] bg-[#f5f6f7] border-r border-[#e2e3e5] flex items-center justify-start pl-[7px] shrink-0">
          <svg width="5" height="8" viewBox="0 0 5 8"><path d="M1 0V8M3.5 0V8" stroke="#888" /></svg>
        </div>
        <Canvas />
        <RightPanel />
      </div>
      <Taskbar />
    </div>
  )
}

export default App
